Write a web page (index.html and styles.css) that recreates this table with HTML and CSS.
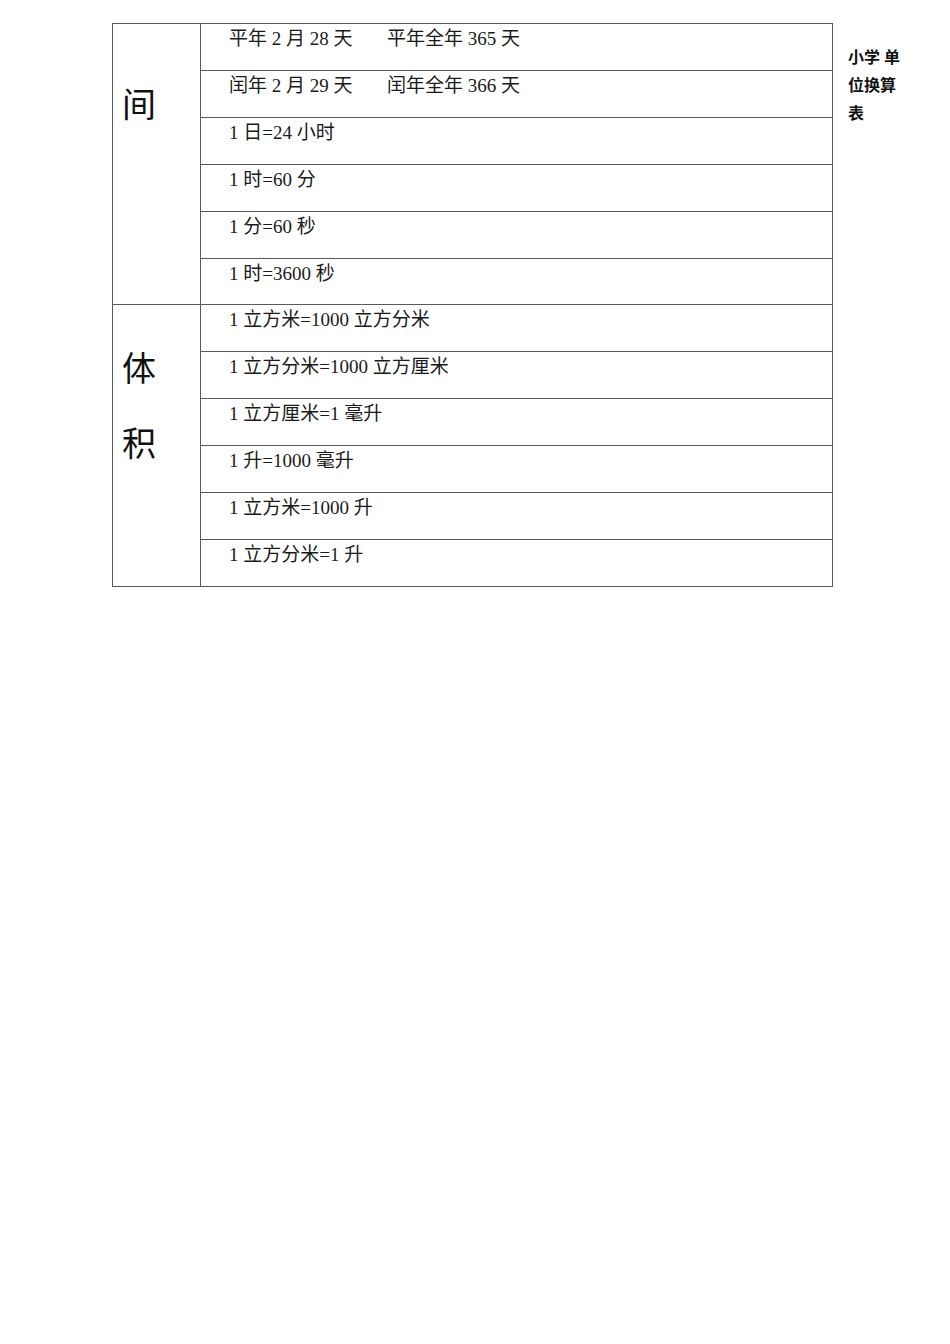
FILE: index.html
```html
<!DOCTYPE html>
<html lang="zh">
<head>
<meta charset="utf-8">
<title>小学单位换算表</title>
<link rel="stylesheet" href="styles.css">
</head>
<body>
<div class="page">
  <div class="table">
    <div class="section">
      <div class="label label-time"><span>间</span></div>
      <div class="rows">
        <div class="row"><span class="first">平年 2 月 28 天</span><span>平年全年 365 天</span></div>
        <div class="row"><span class="first">闰年 2 月 29 天</span><span>闰年全年 366 天</span></div>
        <div class="row">1 日=24 小时</div>
        <div class="row">1 时=60 分</div>
        <div class="row">1 分=60 秒</div>
        <div class="row">1 时=3600 秒</div>
      </div>
    </div>
    <div class="section">
      <div class="label label-volume"><span>体</span><span>积</span></div>
      <div class="rows">
        <div class="row">1 立方米=1000 立方分米</div>
        <div class="row">1 立方分米=1000 立方厘米</div>
        <div class="row">1 立方厘米=1 毫升</div>
        <div class="row">1 升=1000 毫升</div>
        <div class="row">1 立方米=1000 升</div>
        <div class="row">1 立方分米=1 升</div>
      </div>
    </div>
  </div>
  <div class="title">
    <span>小学 单</span>
    <span>位换算</span>
    <span>表</span>
  </div>
</div>
</body>
</html>
```

FILE: styles.css
```css
html, body {
  margin: 0;
  padding: 0;
  background: #ffffff;
}

body {
  font-family: "Liberation Serif", "Noto Sans CJK SC", serif;
  color: #1a1a1a;
}

.page {
  display: flex;
  align-items: flex-start;
  padding: 23px 0 0 112px;
  gap: 15px;
}

.table {
  width: 721px;
  box-sizing: border-box;
  border: 1px solid #5a5a5a;
  display: flex;
  flex-direction: column;
}

.section {
  display: flex;
}

.section + .section {
  border-top: 1px solid #5a5a5a;
}

.label {
  width: 88px;
  flex: none;
  border-right: 1px solid #5a5a5a;
  display: flex;
  flex-direction: column;
  align-items: flex-start;
  font-size: 34px;
  line-height: 40px;
  padding-left: 9px;
  box-sizing: border-box;
  color: #111111;
}

.label-time {
  padding-top: 62px;
}

.label-volume {
  padding-top: 45px;
  gap: 35px;
}

.rows {
  flex: 1;
  display: flex;
  flex-direction: column;
}

.row {
  height: 46.92px;
  box-sizing: border-box;
  border-bottom: 1px solid #5a5a5a;
  padding: 3px 0 0 28px;
  font-size: 19px;
  line-height: 23px;
  white-space: nowrap;
}

.row:last-child {
  border-bottom: none;
  height: 45.92px;
}

.first {
  display: inline-block;
  width: 158px;
}

.title {
  display: flex;
  flex-direction: column;
  margin-top: 21px;
  font-size: 16px;
  line-height: 28px;
  font-weight: bold;
  color: #111111;
  white-space: nowrap;
}
```
